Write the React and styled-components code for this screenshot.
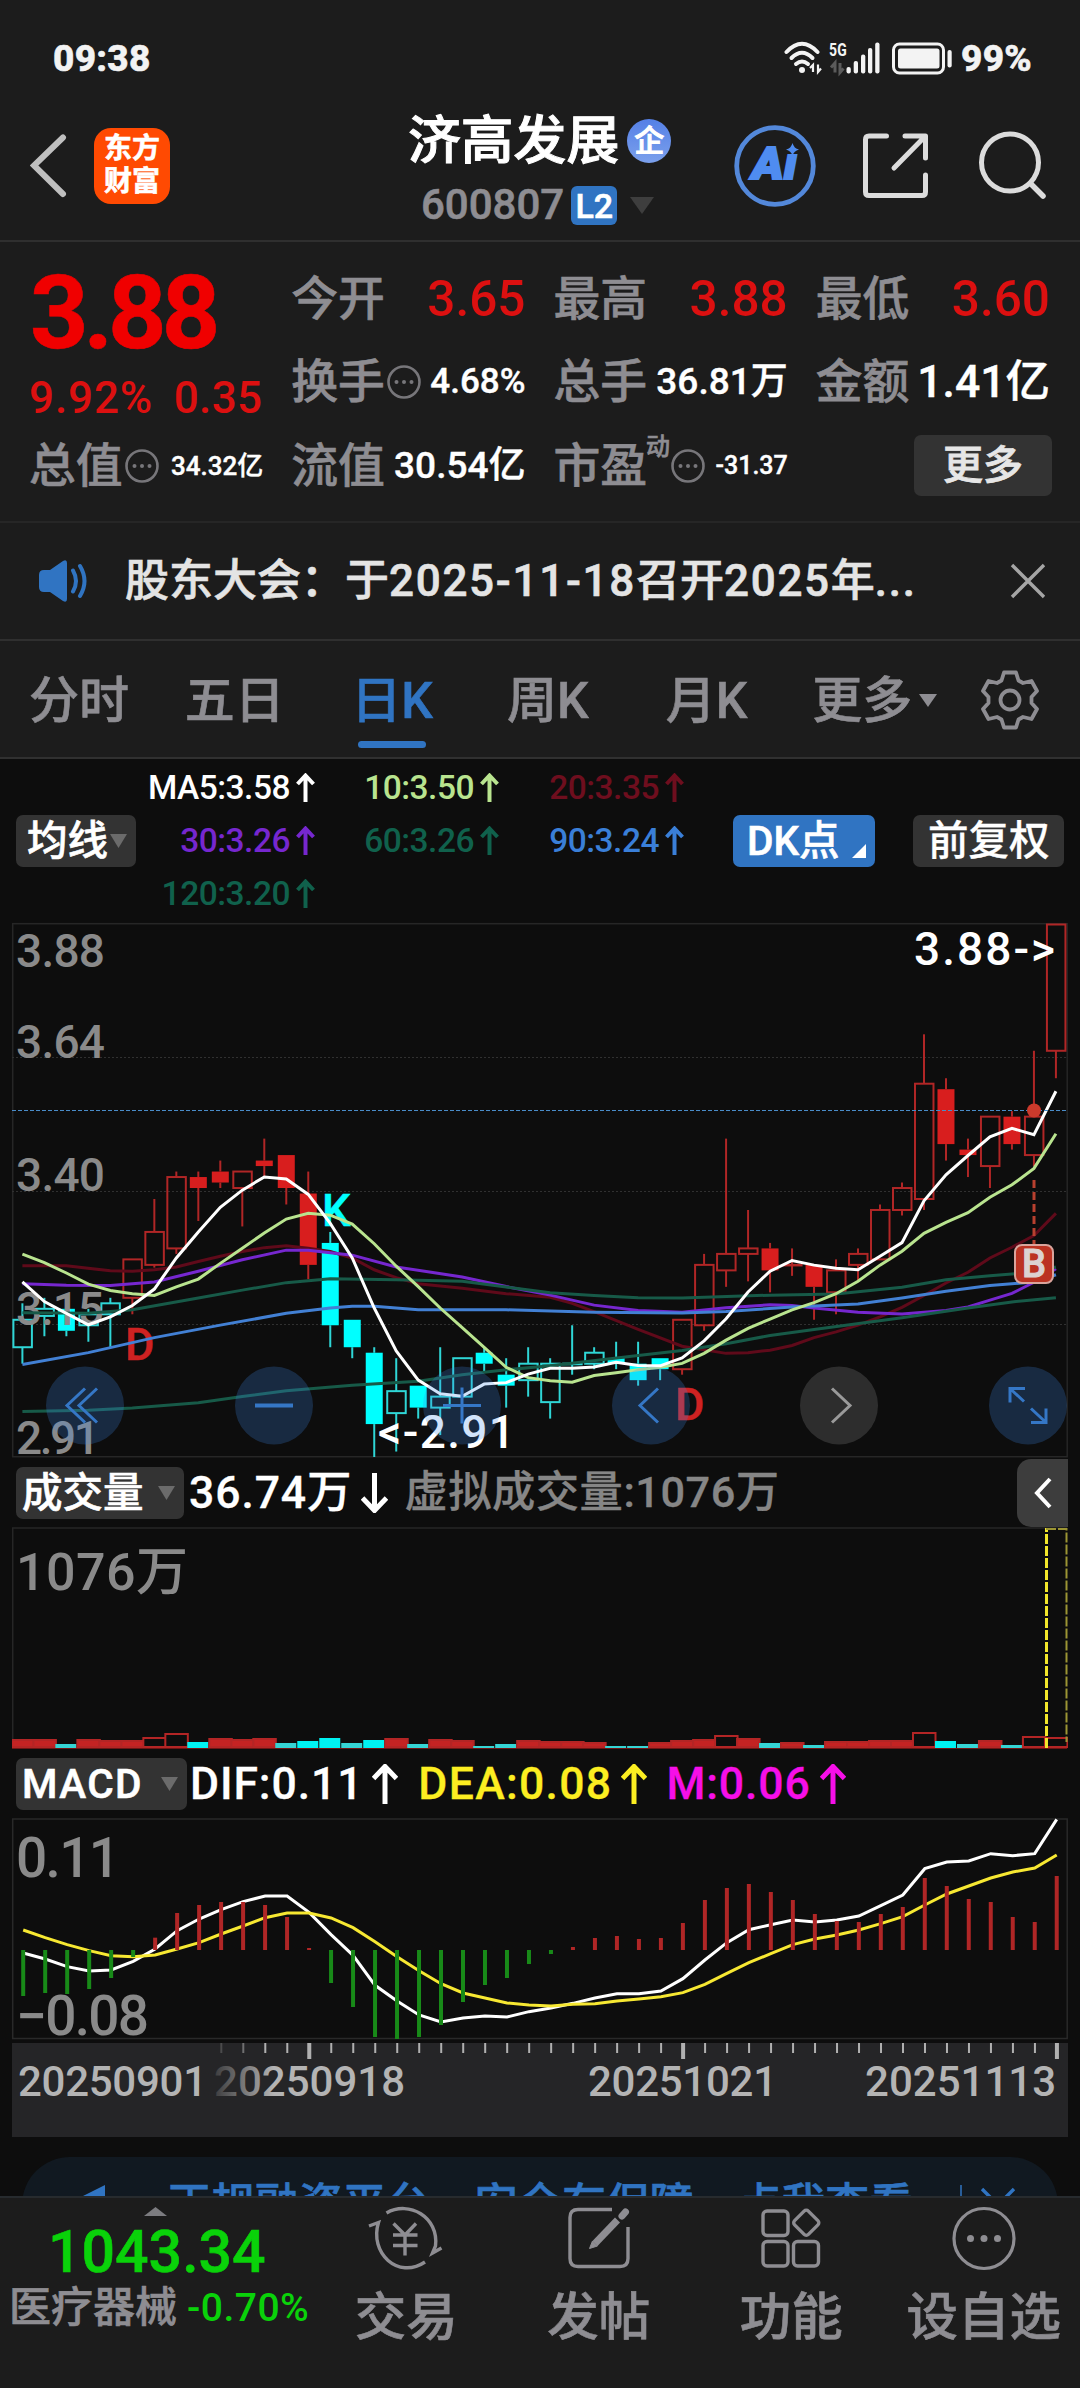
import React from 'react';
import styled, { createGlobalStyle } from 'styled-components';

const white = '#ffffff';
const gray = '#8e8d92';
const darkGray = '#333333';
const blue = '#3074c2';
const red = '#dc1010';
const green = '#0ad20a';
const panel = '#1c1c1c';
const canvas = '#0d0d0d';
const line = '#2f2f2f';

const GlobalStyle = createGlobalStyle`
  body {
    margin: 0;
    background: ${canvas};
    font-family: Roboto, 'Noto Sans CJK SC', sans-serif;
    font-weight: 500;
    -webkit-text-stroke: 0.6px;
    color: ${white};
  }
  * {
    box-sizing: border-box;
  }
  svg {
    display: block;
    flex: none;
  }
`;

const Screen = styled.div`
  width: 1080px;
  height: 2388px;
  overflow: hidden;
  display: flex;
  flex-direction: column;
  background: ${canvas};
  white-space: nowrap;
`;

/* ---------- status bar and title ---------- */

const StatusBar = styled.div`
  height: 80px;
  padding: 38px 48px 0 53px;
  display: flex;
  justify-content: space-between;
  align-items: flex-start;
  background: ${panel};
  font-size: 37px;
  font-weight: 800;
  line-height: 42px;
  letter-spacing: 0.3px;
  color: #f3f3f3;
`;

const StatusIcons = styled.div`
  display: flex;
  align-items: center;
  height: 42px;
  gap: 8px;
`;

const TitleBar = styled.div`
  height: 162px;
  display: flex;
  background: ${panel};
  border-bottom: 2px solid ${line};
`;

const TitleLeft = styled.div`
  width: 380px;
  padding: 48px 0 0 30px;
  display: flex;
  gap: 26px;
`;

const Logo = styled.div`
  width: 76px;
  height: 76px;
  border-radius: 17px;
  background: #ff4a02;
  font-size: 28px;
  font-weight: 700;
  line-height: 33px;
  padding-top: 4px;
  text-align: center;
`;

const TitleCenter = styled.div`
  width: 340px;
  display: flex;
  flex-direction: column;
`;

const NameRow = styled.div`
  display: flex;
  align-items: center;
  height: 60px;
  margin: 31px 0 0 28px;
  gap: 8px;
  font-size: 52.8px;
  line-height: 60px;
  -webkit-text-stroke: 1px;
`;

const CompanyBadge = styled.span`
  width: 44px;
  height: 44px;
  border-radius: 50%;
  background: linear-gradient(#5580e6, #7ba0ec);
  font-size: 30px;
  line-height: 43px;
  text-align: center;
`;

const CodeRow = styled.div`
  display: flex;
  align-items: center;
  height: 42px;
  margin: 13px 0 0 41px;
  font-size: 42px;
  line-height: 42px;
  color: ${gray};
`;

const LevelBadge = styled.span`
  width: 46px;
  height: 39px;
  margin: 0 13px 0 7px;
  border-radius: 6px;
  background: ${blue};
  color: ${white};
  font-size: 34px;
  line-height: 40px;
  text-align: center;
`;

const TitleIcons = styled.div`
  flex: 1;
  padding: 45px 34px 0 14px;
  display: flex;
  justify-content: space-between;
  align-items: flex-start;
`;

/* ---------- quote ---------- */

const Quote = styled.div`
  height: 281px;
  padding: 15px 30px 0;
  display: grid;
  grid-template-columns: repeat(4, 1fr);
  grid-auto-rows: 83.5px;
  column-gap: 29px;
  background: ${panel};
  border-bottom: 2px solid #262626;
`;

const PriceCell = styled.div`
  grid-row: span 2;
  color: #f00000;
`;

const Price = styled.div`
  font-size: 102px;
  line-height: 113px;
  font-weight: 700;
  letter-spacing: -5px;
`;

const Change = styled.div`
  display: flex;
  justify-content: space-between;
  margin: -2px 0 0 -1px;
  padding-right: 1px;
  font-size: 44px;
  line-height: 60px;
  letter-spacing: 0.3px;
  color: ${red};
  -webkit-text-stroke: 0;

  & > :first-child {
    letter-spacing: 0.9px;
  }
`;

const QuoteCell = styled.div`
  display: flex;
  align-items: center;
  min-width: 0;
`;

const QuoteLabel = styled.span`
  margin-left: -1px;
  font-size: 46.8px;
  line-height: 60px;
  color: ${gray};
`;

const QuoteSup = styled.sup`
  align-self: flex-start;
  margin: 8px -1px 0 -1px;
  font-size: 24px;
  line-height: 30px;
  color: ${gray};
`;

const QuoteValue = styled.span`
  margin-left: auto;
  font-size: ${p => p.size}px;
  line-height: 60px;
  color: ${p => p.color || white};
  -webkit-text-stroke: ${p => (p.color ? 0 : 0.4)}px;
`;

const MoreButton = styled.button`
  width: 138px;
  height: 61px;
  margin: 0 -2px 0 auto;
  border: 0;
  border-radius: 7px;
  background: ${darkGray};
  color: #e6e6e6;
  font: 500 40px/58px Roboto, 'Noto Sans CJK SC', sans-serif;
  -webkit-text-stroke: 0.8px;
  padding: 0;
`;

/* ---------- notice and tabs ---------- */

const Notice = styled.div`
  height: 118px;
  padding: 0 34px 0 38px;
  display: flex;
  align-items: center;
  background: ${panel};
  border-bottom: 2px solid ${line};
`;

const NoticeText = styled.div`
  flex: 1;
  margin-left: 36px;
  font-size: 44px;
  line-height: 60px;
  color: #e4e4e4;
`;

const Wide = styled.span`
  letter-spacing: 1.7px;
`;

const Tabs = styled.div`
  height: 118px;
  padding: 29px 40px 0 29px;
  display: flex;
  background: ${panel};
  border-bottom: 2px solid #303030;
`;

const Tab = styled.div`
  width: ${p => p.width}px;
  display: flex;
  align-items: flex-start;
  gap: 7px;
  font-size: 50px;
  line-height: 62px;
  color: ${p => (p.active ? blue : gray)};

  & > span {
    height: 78px;
    display: flex;
    flex-direction: column;
    justify-content: space-between;
  }
  & svg {
    margin-top: 24px;
  }
`;

const TabLine = styled.i`
  width: 68px;
  height: 7px;
  margin-left: 7px;
  border-radius: 4px;
  background: ${blue};
`;

/* ---------- chart headers ---------- */

const Averages = styled.div`
  height: 164px;
  padding: 0 16px 1px;
  display: flex;
  align-items: center;
`;

const AverageGrid = styled.div`
  width: 549px;
  margin-right: 48px;
  display: grid;
  grid-template-columns: 179px 184px 185px;
  grid-auto-rows: 53px;
`;

const Average = styled.div`
  display: flex;
  justify-content: flex-end;
  align-items: center;
  gap: 6px;
  font-size: 33.5px;
  line-height: 53px;
  letter-spacing: -0.5px;
  color: ${p => p.color};
  -webkit-text-stroke: 0;
`;

const Picker = styled.div`
  width: ${p => p.width}px;
  height: 52px;
  padding: 0 9px 0 ${p => p.pad || 8}px;
  display: flex;
  align-items: center;
  justify-content: space-between;
  border-radius: 7px;
  background: ${p => p.bg || darkGray};
  font-size: 40.5px;
  line-height: 50px;
  letter-spacing: ${p => p.spacing || 0}px;
`;

const IndexRow = styled.div`
  height: 69px;
  padding: 0 12px 0 16px;
  display: flex;
  align-items: center;
`;

const IndexValue = styled.div`
  display: flex;
  align-items: center;
  gap: 9px;
  margin-left: ${p => p.gap}px;
  font-size: ${p => p.size || 44.5}px;
  line-height: 60px;
  letter-spacing: ${p => (p.spacing === undefined ? 0.9 : p.spacing)}px;
  color: ${p => p.color || white};
  -webkit-text-stroke: 0.3px;
`;

const Collapse = styled.div`
  width: 51px;
  height: 68px;
  margin-left: auto;
  display: flex;
  align-items: center;
  justify-content: center;
  border-radius: 14px 0 0 14px;
  background: #3d3d3d;
`;

const ChartSvg = styled.svg`
  margin-left: 12px;
  overflow: ${p => (p.$clip ? 'hidden' : 'visible')};

  text {
    font-family: Roboto, 'Noto Sans CJK SC', sans-serif;
    font-weight: 500;
  }
`;

const Axis = styled.div`
  margin: 3px 0 0 12px;
  width: 1056px;
  height: 94px;
  background: #252527;

  & svg {
    margin: 0;
  }
`;

/* ---------- banner and bottom bar ---------- */

const BannerClip = styled.div`
  height: 59px;
  padding: 20px 22px 0;
  overflow: hidden;
`;

const Banner = styled.div`
  height: 96px;
  border-radius: 48px;
  padding: 0 42px 0 53px;
  display: flex;
  align-items: center;
  background: #111921;
  color: ${blue};
  font-size: 43.9px;
  line-height: 96px;

  & > span {
    flex: 1;
    margin-left: 58px;
  }
`;

const BottomBar = styled.div`
  flex: 1;
  display: flex;
  background: ${panel};
  border-top: 2px solid #272b2e;
`;

const Sector = styled.div`
  width: 310px;
  padding: 9px 0 0 9px;

  & > svg {
    margin-left: 135px;
  }
`;

const SectorIndex = styled.div`
  padding-left: 39px;
  font-size: 59px;
  line-height: 68px;
  margin-top: 2px;
  color: ${green};
`;

const SectorRow = styled.div`
  display: flex;
  align-items: center;
  gap: 10px;
  margin-top: -3px;
  font-size: 42px;
  line-height: 50px;
  color: ${gray};

  & em {
    font-style: normal;
    font-size: 39px;
    letter-spacing: 0.5px;
    color: ${green};
    -webkit-text-stroke: 0;
  }
`;

const NavItem = styled.div`
  flex: 1;
  padding-top: 7px;
  display: flex;
  flex-direction: column;
  align-items: center;
  font-size: 51.5px;
  line-height: 64px;
  color: ${gray};

  & > svg {
    margin-bottom: 13px;
  }
`;

/* ---------- icons ---------- */

const Caret = ({ w = 17, h = 14, color = '#6b6b6b', up }) => (
  <svg width={w} height={h}>
    <path d={up ? `M0 ${h}L${w / 2} 0L${w} ${h}Z` : `M0 0H${w}L${w / 2} ${h}Z`} fill={color} />
  </svg>
);

const Arrow = ({ w = 19, h = 29, sw = 4, down }) => (
  <svg width={w} height={h} transform={down ? 'rotate(180)' : undefined}>
    <path
      d={`M${w / 2} ${h}V2M1.5 ${w / 2 + 1.5}L${w / 2} 2.5L${w - 1.5} ${w / 2 + 1.5}`}
      fill="none"
      stroke="currentColor"
      strokeWidth={sw}
    />
  </svg>
);

const Dots = () => (
  <svg width="36" height="36">
    <circle cx="19" cy="18" r="15.5" fill="none" stroke="#77767a" strokeWidth="2.6" />
    <circle cx="11.5" cy="18" r="2" fill="#77767a" />
    <circle cx="19" cy="18" r="2" fill="#77767a" />
    <circle cx="26.5" cy="18" r="2" fill="#77767a" />
  </svg>
);

const StatusGlyphs = () => (
  <svg width="169" height="50" viewBox="782 35 169 50">
    <g fill="none" stroke="#f3f3f3" strokeWidth="4" strokeLinecap="round">
      <path d="M784.5 53Q800 36.5 815.5 53" />
      <path d="M789.5 59Q800 48.5 810.5 59" />
      <path d="M794 65Q800 60 806 65" />
    </g>
    <circle cx="800" cy="71" r="3" fill="#f3f3f3" />
    <path d="M811 73V66L808 69M816 65.5V73L819 69.5" fill="none" stroke="#f3f3f3" strokeWidth="2.2" />
    <path d="M833 73.5V64L829 68.5M838 64V73.5L841.5 69.5" fill="none" stroke="#5b5b5b" strokeWidth="3" />
    <text x="827" y="57" fontSize="18" fontWeight="700" fill="#f3f3f3" textLength="18" lengthAdjust="spacingAndGlyphs">5G</text>
    <g fill="#f3f3f3">
      <rect x="844.5" y="68" width="4.3" height="6.5" rx="2" />
      <rect x="851.7" y="62" width="4.3" height="12.5" rx="2" />
      <rect x="859" y="55.5" width="4.3" height="19" rx="2" />
      <rect x="866" y="49" width="4.3" height="25.5" rx="2" />
      <rect x="873.2" y="43.5" width="4.3" height="31" rx="2" />
      <rect x="896" y="49.5" width="41.5" height="20" rx="2.5" />
      <rect x="945.5" y="51" width="4.2" height="17.5" rx="2" />
    </g>
    <rect x="891.5" y="45" width="50" height="29" rx="6" fill="none" stroke="#f3f3f3" strokeWidth="3" />
  </svg>
);

const BackIcon = () => (
  <svg width="38" height="76">
    <path d="M33 9.5L4 37.5L33 66" fill="none" stroke="#bfbfbf" strokeWidth="6" strokeLinecap="round" />
  </svg>
);

const AiIcon = () => (
  <svg width="82" height="82" viewBox="0 0 82 82">
    <circle cx="41" cy="41" r="38.3" fill="none" stroke="#5388da" strokeWidth="4.8" />
    <text x="18" y="54" fontSize="44" fontWeight="900" fontStyle="italic" fill="#4f8cf0" stroke="#4f8cf0" strokeWidth="2" textLength="45" lengthAdjust="spacingAndGlyphs">
      Aı
    </text>
    <path d="M58.5 18Q60 23.500 65 24.5Q60 26 58.5 30.5Q57 26 52 24.5Q57 23.500 58.5 18Z" fill="#4f8cf0" />
  </svg>
);

const ShareIcon = () => (
  <svg width="66" height="82" fill="none" stroke="#dcdcdc" strokeWidth="5" strokeLinecap="round" strokeLinejoin="round">
    <path d="M23.5 11H6Q2.5 11 2.5 14.5V67Q2.5 70.5 6 70.5H59Q62.5 70.5 62.5 67V50" />
    <path d="M42 11H62.5V33M61 12.5L31 43" />
  </svg>
);

const SearchIcon = () => (
  <svg width="70" height="82" fill="none" stroke="#dcdcdc" strokeWidth="5">
    <circle cx="34" cy="37.5" r="28.5" />
    <path d="M54.5 58.5L67 71" strokeLinecap="round" strokeWidth="5.5" />
  </svg>
);

const SpeakerIcon = () => (
  <svg width="51" height="46" viewBox="0 0 51 46">
    <path d="M6 12H12L25 3Q29 1 29 5V41Q29 45 25 43L12 34H6Q1 34 1 29V17Q1 12 6 12Z" fill={blue} />
    <path d="M35 12.5Q41 23 35 33.5M42 8Q51 23 42 38" fill="none" stroke={blue} strokeWidth="4" strokeLinecap="round" />
  </svg>
);

const CloseIcon = ({ color = '#a5a5a5', sw = 3.4 }) => (
  <svg width="36" height="36">
    <path d="M2 2L34 34M34 2L2 34" fill="none" stroke={color} strokeWidth={sw} />
  </svg>
);

const GearIcon = () => (
  <svg width="60" height="60" viewBox="-30 -30 60 60" fill="none" stroke={gray} strokeWidth="3.8" strokeLinejoin="round">
    <path d="M-6 -27.5H6L8.5 -19.5L13 -17L21.5 -19L27 -9L21.5 -3V3L27 9L21.5 19L13 17L8.5 19.5L6 27.5H-6L-8.5 19.5L-13 17L-21.5 19L-27 9L-21.5 3V-3L-27 -9L-21.5 -19L-13 -17L-8.5 -19.5Z" />
    <circle r="9.5" />
  </svg>
);

const TradeIcon = () => (
  <svg width="76" height="68" viewBox="0 0 76 68" fill="none" stroke={gray} strokeWidth="3.4">
    <path d="M18.5 8C41 -5 71 12 67.5 41L64.5 48L73.5 43" />
    <path d="M1 21L10.5 17.5C1 48 30 75 57 57" />
    <path d="M25.5 18.5L37 30L48 18.5M25 30H49.5M25 40.5H49.5M37 30V50.5" />
  </svg>
);

const PostIcon = () => (
  <svg width="64" height="68" viewBox="0 0 64 68" fill="none" stroke={gray} strokeWidth="3.4">
    <path d="M45 4.5H11Q3 4.5 3 12.5V53.5Q3 61.5 11 61.5H53Q61 61.5 61 53.5V22" />
    <path d="M50.5 15L28 38.5" strokeWidth="7" />
    <path d="M25.5 36L22.5 43.5L30.5 41Z" fill={gray} strokeWidth="1" />
    <path d="M55 11L58.5 7" strokeWidth="7" strokeLinecap="round" />
  </svg>
);

const GridIcon = () => (
  <svg width="60" height="68" viewBox="0 0 60 68" fill="none" stroke={gray} strokeWidth="3.4">
    <rect x="2" y="6" width="25" height="24.5" rx="4" />
    <rect x="2" y="36.5" width="25" height="24.5" rx="4" />
    <rect x="32.5" y="36.5" width="25" height="24.5" rx="4" />
    <rect x="35.5" y="8" width="19.5" height="19.5" rx="3" transform="rotate(45 45.25 17.75)" />
  </svg>
);

const MoreIcon = () => (
  <svg width="66" height="68" viewBox="0 0 66 68">
    <circle cx="33" cy="33.5" r="30" fill="none" stroke={gray} strokeWidth="3.2" />
    <circle cx="19.5" cy="33.5" r="3.5" fill={gray} />
    <circle cx="33" cy="33.5" r="3.5" fill={gray} />
    <circle cx="46.5" cy="33.5" r="3.5" fill={gray} />
  </svg>
);

/* ---------- chart data ---------- */

const STEP = 21.99;
const FIRST = 10.4;
const xOf = i => FIRST + i * STEP;

// kind, body top, body bottom, high, low: in cents under the day's limit price
// r/c is the colour, capital letter means a filled body
const candles = [
  ['c', 72, 77, 69, 80], ['c', 70, 71.3, 68, 75], ['C', 70, 74, 69, 75], ['c', 71, 73, 70, 76],
  ['c', 69, 71, 68, 77], ['r', 61, 68, 61, 71], ['r', 56, 62, 50, 62.5], ['r', 46, 59, 45, 60],
  ['R', 46, 48, 45, 54], ['R', 45, 47, 43, 48], ['r', 45, 48, 45, 55], ['R', 43, 44, 39, 46],
  ['R', 42, 48, 42, 51], ['R', 49, 62, 45, 64.6], ['C', 58, 73, 56, 77], ['C', 72, 77, 72, 79],
  ['C', 78, 91, 77, 97], ['c', 85, 89, 79, 96], ['C', 84, 88, 84, 90], ['c', 86, 88, 77, 93],
  ['c', 79, 86, 79, 86], ['C', 78, 80, 77, 81.5], ['C', 82, 84, 79, 88], ['c', 80, 83, 77, 86],
  ['c', 80, 87, 79, 90], ['c', 80, 80.1, 73, 82], ['c', 78, 80, 77, 81], ['C', 79, 80, 76, 81],
  ['C', 80, 83, 76, 84], ['C', 79, 81, 79, 83], ['r', 72, 81, 72, 82], ['r', 62, 73, 60, 74],
  ['r', 60, 63, 39, 66], ['r', 59, 60, 52, 65], ['R', 59, 63, 58, 67], ['r', 62, 62.1, 59, 64],
  ['R', 62, 66, 62, 72], ['r', 63, 67, 61, 71], ['r', 60, 62, 59, 65], ['r', 52, 61, 51, 61],
  ['r', 48, 52, 47, 53], ['r', 29, 50, 20, 52], ['R', 30, 40, 28, 43], ['R', 41, 42, 39, 46],
  ['r', 35, 44, 35, 48], ['R', 35, 40, 34, 41], ['r', 35, 42, 23, 44], ['r', 0, 23, 0, 28],
];

const averages = [
  { color: '#5f0a1a', pts: [[0, 997], [2, 997], [4, 1011], [5, 1012], [6, 1008], [7, 1000], [8, 985], [9, 970], [10, 957], [11, 946], [12, 941], [13, 948], [14, 957], [15, 975], [16, 1008], [17, 1030], [18, 1047], [20, 1060], [22, 1075], [24, 1085], [25, 1102], [26, 1125], [28, 1175], [30, 1222], [32, 1242], [33, 1240], [34, 1233], [35, 1220], [36, 1198], [37, 1182], [38, 1163], [39, 1140], [40, 1113], [41, 1080], [42, 1045], [43, 1015], [44, 975], [45, 945], [46, 912], [47, 850]] },
  { color: '#7627cf', pts: [[0, 1047], [2, 1051], [4, 1052], [6, 1042], [8, 1012], [10, 980], [12, 953], [13, 953], [15, 967], [17, 1000], [20, 1028], [22, 1055], [24, 1079], [26, 1107], [28, 1122], [30, 1127], [32, 1114], [34, 1106], [35, 1108], [36, 1115], [38, 1127], [40, 1132], [42, 1122], [43, 1112], [44, 1093], [45, 1074], [46, 1043], [47, 1005]] },
  { color: '#175a48', pts: [[0, 1128], [3, 1130], [5, 1120], [8, 1087], [10, 1065], [12, 1044], [14, 1033], [17, 1036], [20, 1040], [22, 1056], [24, 1072], [26, 1080], [28, 1086], [30, 1087], [34, 1079], [37, 1076], [40, 1057], [42, 1036], [44, 1025], [46, 1015], [47, 1000]] },
  { color: '#4280d4', pts: [[0, 1273], [3, 1240], [6, 1198], [9, 1163], [12, 1130], [14, 1115], [15, 1110], [16, 1110], [18, 1120], [22, 1120], [26, 1127], [30, 1129], [32, 1125], [35, 1112], [38, 1104], [40, 1087], [42, 1068], [44, 1052], [46, 1042], [47, 1022]] },
  { color: '#175a48', pts: [[0, 1405], [3, 1401], [5, 1395], [8, 1380], [10, 1363], [12, 1347], [15, 1331], [18, 1320], [20, 1302], [22, 1288], [24, 1277], [28, 1248], [30, 1234], [32, 1215], [34, 1192], [36, 1175], [40, 1142], [43, 1115], [45, 1098], [47, 1086]] },
  { color: '#b9e48f', pts: [964, 988, 1017, 1048, 1066, 1075, 1080, 1056, 1034, 990, 948, 905, 866, 850, 855, 880, 935, 998, 1055, 1115, 1170, 1225, 1281, 1310, 1319, 1323, 1304, 1296, 1288, 1281, 1270, 1242, 1205, 1172, 1146, 1120, 1100, 1075, 1040, 995, 956, 906, 875, 848, 805, 770, 724, 627].map((v, i) => [i, v]) },
  { color: '#ffffff', pts: [1042, 1097, 1130, 1162, 1140, 1108, 1062, 975, 902, 833, 785, 748, 754, 797, 878, 975, 1115, 1235, 1317, 1355, 1362, 1328, 1324, 1300, 1284, 1284, 1280, 1267, 1276, 1277, 1255, 1207, 1145, 1070, 1012, 982, 995, 1004, 1008, 970, 932, 815, 742, 688, 636, 612, 630, 508].map((v, i) => [i, v]) },
];

const volumes = 'r7 r7 c4 r7 r6 r6 r9 r13 c6 r8 r7 r8 c5 c7 c10 c5 c8 r8 c4 r7 r6 c2 c4 r6 r5 r5 r4 c2 c2 r4 r6 r7 r11 r8 c5 r4 c3 r5 r5 r6 r6 r14 c7 c4 r6 c3 r10 r9'.split(' ');

const macd = [-138, -129, -132, -117, -84, -21, 37, 111, 135, 144, 144, 135, 99, 6, -99, -171, -261, -267, -261, -225, -156, -105, -84, -42, -12, 9, 36, 42, 33, 36, 81, 150, 186, 198, 174, 150, 108, 87, 84, 108, 129, 216, 192, 153, 144, 99, 84, 222];
const dif = [459, 477, 500, 513, 510, 484, 447, 392, 357, 329, 305, 288, 288, 337, 404, 466, 556, 603, 645, 666, 654, 648, 651, 635, 624, 610, 594, 581, 581, 573, 536, 480, 428, 389, 374, 360, 366, 360, 348, 317, 285, 206, 186, 183, 161, 167, 161, 58];
const dea = [390, 413, 434, 452, 467, 470, 465, 447, 428, 402, 378, 353, 339, 339, 354, 383, 425, 470, 512, 551, 579, 594, 609, 615, 618, 613, 611, 603, 597, 590, 578, 553, 520, 488, 461, 434, 417, 405, 390, 371, 350, 315, 282, 258, 234, 216, 204, 165];

const candleRed = '#b02626';
const candleCyan = '#2fd6d6';

const Candle = ({ i, data }) => {
  const [kind, top, bottom, high, low] = data;
  const y = k => 1.5 + k * 5.49;
  const isRed = kind.toLowerCase() === 'r';
  const filled = kind !== kind.toLowerCase();
  const color = isRed ? candleRed : candleCyan;
  const x = xOf(i);
  return (
    <g stroke={color} strokeWidth="2">
      {high < top && <line x1={x} x2={x} y1={y(high)} y2={y(top)} />}
      {low > bottom && <line x1={x} x2={x} y1={y(bottom)} y2={y(low)} />}
      {filled ? (
        <rect x={x - 8.5} y={y(top)} width="17" height={y(bottom) - y(top)} fill={isRed ? '#d81e1e' : '#00ffff'} stroke="none" />
      ) : (
        <rect x={x - 9} y={y(top)} width="18.5" height={y(bottom) - y(top)} fill="none" />
      )}
    </g>
  );
};

const RoundButton = ({ x, children, off }) => (
  <g transform={`translate(${x} 482.5)`} fill="none" stroke={off ? '#9a9a9a' : '#3577c6'} strokeWidth="3">
    <circle r="39" fill={off ? 'rgba(150,150,150,.24)' : 'rgba(61,139,235,.24)'} stroke="none" />
    {children}
  </g>
);

const KChart = () => (
  <ChartSvg width="1056" height="535">
    <g stroke="#262626" strokeWidth="1.5" fill="none">
      <rect x="0.7" y="0.7" width="1054.5" height="533" />
      <path d="M0 134.5H1055M0 268.5H1055M0 401.5H1055" stroke="#303030" strokeWidth="1" strokeDasharray="2 2" />
    </g>
    {candles.map((c, i) => <Candle key={i} i={i} data={c} />)}
    <g fill="#8a8a8a" fontSize="46">
      <text x="4" y="43.5" textLength="89">3.88</text>
      <text x="4" y="134.5" textLength="89">3.64</text>
      <text x="4" y="268" textLength="89">3.40</text>
      <text x="4" y="402" textLength="88">3.15</text>
      <text x="4" y="530.5" textLength="84">2.91</text>
    </g>
    <g fontSize="45">
      <text x="310" y="303" fill="#0ff" stroke="#0ff" strokeWidth="0.5">K</text>
      <text x="113" y="437" fill="#cf2222" stroke="#cf2222" strokeWidth="0.5">D</text>
      <text x="663" y="497" fill="#cf2222" stroke="#cf2222" strokeWidth="0.5">D</text>
    </g>
    {averages.map((a, n) => (
      <polyline
        key={n}
        points={a.pts.map(([i, v]) => `${xOf(i)},${(v - 37) / 2.8}`).join(' ')}
        fill="none"
        stroke={a.color}
        strokeWidth="3"
      />
    ))}
    <path d="M0 187.5H1055" stroke="#4a8cc8" strokeDasharray="4 2" />
    <circle cx="1022" cy="187.5" r="7" fill="#cc3a2c" />
    <path d="M1022 257V322" stroke="#b8402f" strokeWidth="3" strokeDasharray="8 4" />
    <g fill="#fff" fontSize="46">
      <text x="366" y="525" textLength="137">&lt;-2.91</text>
      <text x="902" y="42" textLength="141">3.88-&gt;</text>
    </g>
    <rect x="1003" y="322" width="38" height="38" rx="7" fill="#bb3322" stroke="#d9a49c" strokeWidth="2" />
    <text x="1022" y="354" fontSize="38" fill="#dcd3d1" stroke="#dcd3d1" textAnchor="middle">B</text>

    <RoundButton x={73}><path d="M0 -17L-18 0L0 17M12 -17L-6 0L12 17" /></RoundButton>
    <RoundButton x={262}><path d="M-19 0H19" strokeWidth="4" /></RoundButton>
    <RoundButton x={450}><path d="M-19 0H19M0 -18V18" /></RoundButton>
    <RoundButton x={639}><path d="M7 -17L-11 0L7 17" /></RoundButton>
    <RoundButton x={827} off><path d="M-7 -17L11 0L-7 17" /></RoundButton>
    <RoundButton x={1016}>
      <path d="M-18 -3V-17H-3M-18 -17L-4 -4M18 3V17H3M18 17L3 3" />
    </RoundButton>
  </ChartSvg>
);

const VolumeChart = () => (
  <ChartSvg width="1056" height="222" $clip>
    <path d="M0.7 222V1H1055" stroke="#262626" strokeWidth="1.5" fill="none" />
    <text x="4" y="62.5" fill="#8a8a8a" fontSize="52" textLength="172">1076万</text>
    {volumes.map((v, i) => {
      const h = Number(v.slice(1));
      const x = xOf(i) - 11;
      if (v[0] === 'c') {
        return <rect key={i} x={x} y={221 - h} width="21" height={h} fill={h > 5 ? '#00f2f2' : '#35d4d4'} />;
      }
      return (
        <rect key={i} x={x} y={220 - h} width="22.5" height={h} fill={h > 8 ? canvas : '#c42323'} stroke="#b32525" strokeWidth="2" />
      );
    })}
    <path d="M1034.5 221V1" stroke="#f2e62a" strokeWidth="3" strokeDasharray="10 2" />
    <path d="M1034 2H1054.5V215" fill="none" stroke="#9c9534" strokeWidth="2" strokeDasharray="10 2" />
    <path d="M0 221.5H1055" stroke="#6e1414" />
  </ChartSvg>
);

const MacdChart = () => {
  const toPoints = list => list.map((v, i) => `${xOf(i) + 0.8},${(v - 54) / 3}`).join(' ');
  return (
    <ChartSvg width="1056" height="222">
      <rect x="0.7" y="1" width="1054.5" height="219.5" stroke="#292929" strokeWidth="1.5" fill="none" />
      <g fill="#8a8a8a" fontSize="55">
        <text x="4" y="58.5" textLength="104">0.11</text>
        <text x="4" y="216.5" textLength="133">−0.08</text>
      </g>
      <polyline points={toPoints(dif)} fill="none" stroke="#fff" strokeWidth="3" />
      <polyline points={toPoints(dea)} fill="none" stroke="#f7e832" strokeWidth="3" />
      {macd.map((v, i) => (
        <rect
          key={i}
          x={xOf(i) - 1.2}
          y={v > 0 ? 132 - v / 3 : 132}
          width="4"
          height={Math.abs(v) / 3}
          fill={v > 0 ? '#b02626' : '#188a18'}
        />
      ))}
    </ChartSvg>
  );
};

const DateAxis = () => (
  <Axis>
    <ChartSvg width="1056" height="94">
      <defs>
        <linearGradient id="fade" gradientUnits="userSpaceOnUse" x1="190" x2="262" y1="0" y2="0">
          <stop offset="0" stopColor="#252527" />
          <stop offset="1" stopColor="#b4b4b4" />
        </linearGradient>
      </defs>
      {macd.map((_, i) => {
        if (i < 9) return null;
        const major = i === 13 || i === 30 || i === 47;
        const w = major ? 4 : 2;
        return (
          <rect key={i} x={xOf(i) + 1 - w / 2} y="0" width={w} height={major ? 16 : 10} fill="#b0b0b0" opacity={i < 11 ? (i - 8) * 0.27 : 1} />
        );
      })}
      <g fontSize="42" fill="#b4b4b4">
        <text x="6" y="53" textLength="189">20250901</text>
        <text x="202" y="53" textLength="191">
          <tspan fill="url(#fade)">20250918</tspan>
        </text>
        <text x="576" y="53" textLength="189">20251021</text>
        <text x="853" y="53" textLength="191">20251113</text>
      </g>
    </ChartSvg>
  </Axis>
);

/* ---------- rows ---------- */

const quotes = [
  { label: '今开', value: '3.65', size: 49.5, color: red },
  { label: '最高', value: '3.88', size: 49.5, color: red },
  { label: '最低', value: '3.60', size: 49.5, color: red },
  { label: '换手', value: '4.68%', size: 35, info: true },
  { label: '总手', value: '36.81万', size: 37 },
  { label: '金额', value: '1.41亿', size: 44.5 },
  { label: '总值', value: '34.32亿', size: 26, info: true },
  { label: '流值', value: '30.54亿', size: 37 },
  { label: '市盈', value: '-31.37', size: 25, info: true, sup: '动' },
];

const averageLabels = [
  ['MA5:3.58', '#ffffff'],
  ['10:3.50', '#b9e48f'],
  ['20:3.35', '#6e0e1e'],
  ['30:3.26', '#7627cf'],
  ['60:3.26', '#10614c'],
  ['90:3.24', '#3a7fd8'],
  ['120:3.20', '#10614c'],
];

class QuoteItem extends React.Component {
  render() {
    const { label, value, size, color, info, sup } = this.props.item;
    return (
      <QuoteCell>
        <QuoteLabel>{label}</QuoteLabel>
        {sup ? <QuoteSup>{sup}</QuoteSup> : null}
        {info ? <Dots /> : null}
        <QuoteValue size={size} color={color}>{value}</QuoteValue>
      </QuoteCell>
    );
  }
}

export default function App() {
  return (
    <Screen>
      <GlobalStyle />
      <StatusBar>
        <span>09:38</span>
        <StatusIcons>
          <StatusGlyphs />
          <span>99%</span>
        </StatusIcons>
      </StatusBar>

      <TitleBar>
        <TitleLeft>
          <BackIcon />
          <Logo>东方<br />财富</Logo>
        </TitleLeft>
        <TitleCenter>
          <NameRow>
            <span>济高发展</span>
            <CompanyBadge>企</CompanyBadge>
          </NameRow>
          <CodeRow>
            600807
            <LevelBadge>L2</LevelBadge>
            <Caret w={24} h={17} color="#3e3e3e" />
          </CodeRow>
        </TitleCenter>
        <TitleIcons>
          <AiIcon />
          <ShareIcon />
          <SearchIcon />
        </TitleIcons>
      </TitleBar>

      <Quote>
        <PriceCell>
          <Price>3.88</Price>
          <Change><span>9.92%</span><span>0.35</span></Change>
        </PriceCell>
        {quotes.map(q => <QuoteItem key={q.label} item={q} />)}
        <QuoteCell><MoreButton>更多</MoreButton></QuoteCell>
      </Quote>

      <Notice>
        <SpeakerIcon />
        <NoticeText>股东大会：于<Wide>2025-11-18</Wide>召开<Wide>2025</Wide>年<Wide>...</Wide></NoticeText>
        <CloseIcon />
      </Notice>

      <Tabs>
        <Tab width={156}>分时</Tab>
        <Tab width={167}>五日</Tab>
        <Tab width={156} active><span>日K<TabLine /></span></Tab>
        <Tab width={159}>周K</Tab>
        <Tab width={147}>月K</Tab>
        <Tab width={168}>更多<Caret w={18} h={13} color={gray} /></Tab>
        <GearIcon />
      </Tabs>

      <Averages>
        <Picker width={120} pad={11}>均线<Caret /></Picker>
        <AverageGrid>
          {averageLabels.map(([text, color]) => (
            <Average key={text} color={color}>{text}<Arrow /></Average>
          ))}
        </AverageGrid>
        <Picker width={142} pad={14} bg={blue}>
          DK点
          <svg width="14" height="34"><path d="M14 20V34H0Z" fill="#fff" /></svg>
        </Picker>
        <IndexValue gap={38} spacing={0}><Picker width={151} pad={15}>前复权</Picker></IndexValue>
      </Averages>

      <KChart />

      <IndexRow>
        <Picker width={168} pad={6}>成交量<Caret /></Picker>
        <IndexValue gap={5}>36.74万<Arrow w={27} h={40} sw={5} down /></IndexValue>
        <IndexValue gap={16} size={43.3} spacing={0.5} color="#868686">虚拟成交量:1076万</IndexValue>
        <Collapse>
          <svg width="20" height="34"><path d="M17 3L4 17L17 31" fill="none" stroke="#fff" strokeWidth="4" /></svg>
        </Collapse>
      </IndexRow>
      <VolumeChart />

      <IndexRow>
        <Picker width={171} pad={6} spacing={1.4}>MACD<Caret /></Picker>
        <IndexValue gap={3}>DIF:0.11<Arrow w={26} h={40} sw={5} /></IndexValue>
        <IndexValue gap={20} spacing={1.3} color="#fcee21">DEA:0.08<Arrow w={26} h={40} sw={5} /></IndexValue>
        <IndexValue gap={19} color="#f60fe8">M:0.06<Arrow w={26} h={40} sw={5} /></IndexValue>
      </IndexRow>
      <MacdChart />
      <DateAxis />

      <BannerClip>
        <Banner>
          <svg width="34" height="40"><path d="M30 0V40L14 28H0V14H2Z" fill={blue} /></svg>
          <span>正规融资平台，安全有保障，点我查看</span>
          <svg width="20" height="40"><path d="M1 0V40" stroke={blue} strokeWidth="1.5" /></svg>
          <CloseIcon color={blue} />
        </Banner>
      </BannerClip>

      <BottomBar>
        <Sector>
          <Caret w={23} h={9} color="#7c7c80" up />
          <SectorIndex>1043.34</SectorIndex>
          <SectorRow>医疗器械<em>-0.70%</em></SectorRow>
        </Sector>
        <NavItem><TradeIcon />交易</NavItem>
        <NavItem><PostIcon />发帖</NavItem>
        <NavItem><GridIcon />功能</NavItem>
        <NavItem><MoreIcon />设自选</NavItem>
      </BottomBar>
    </Screen>
  );
}
